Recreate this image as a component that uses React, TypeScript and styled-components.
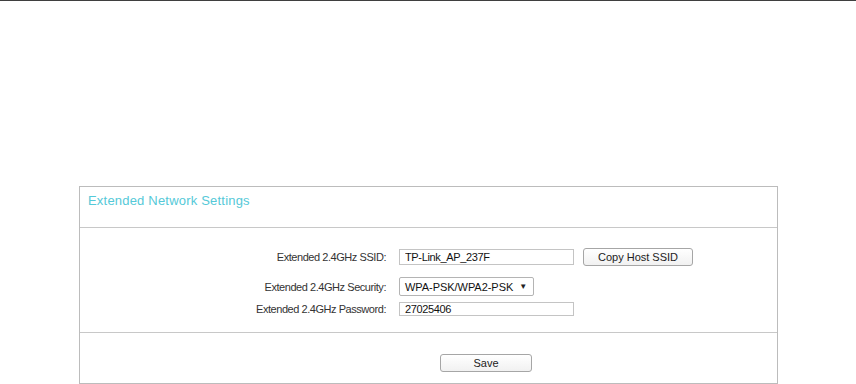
import styled, { createGlobalStyle } from 'styled-components';

const GlobalStyle = createGlobalStyle`
	html, body {
		margin: 0;
		padding: 0;
		background: #ffffff;
		font-family: "Liberation Sans", Arial, sans-serif;
	}
`;

const TopRule = styled.div`
	height: 1px;
	background: #3f3f3f;
`;

const Panel = styled.section`
	width: 697px;
	margin: 185px 0 0 79px;
	border: 1px solid #bcbcbc;
	border-bottom: none;
`;

const PanelHeader = styled.div`
	box-sizing: border-box;
	height: 41px;
	padding: 6px 0 0 8px;
	border-bottom: 1px solid #c8c8c8;
`;

const PanelTitle = styled.h2`
	margin: 0;
	font-size: 13px;
	line-height: 15px;
	font-weight: normal;
	letter-spacing: 0.2px;
	color: #55c9d8;
`;

const PanelBody = styled.div`
	padding: 20px 0 16px;
	border-bottom: 1px solid #c8c8c8;
`;

const FormRow = styled.div<{ $top?: number; $height: number }>`
	display: grid;
	grid-template-columns: 306px auto;
	column-gap: 13px;
	align-items: center;
	height: ${(p) => p.$height}px;
	margin-top: ${(p) => p.$top ?? 0}px;
`;

const Label = styled.label`
	text-align: right;
	font-size: 11px;
	letter-spacing: -0.45px;
	color: #333333;
`;

const Field = styled.div`
	display: flex;
	align-items: center;
	gap: 9px;
`;

const TextInput = styled.input<{ $height: number }>`
	box-sizing: border-box;
	width: 175px;
	height: ${(p) => p.$height}px;
	padding: 0 5px;
	border: 1px solid #c4c4c4;
	font-family: "Liberation Sans", Arial, sans-serif;
	font-size: 11px;
	letter-spacing: -0.35px;
	color: #111111;
	outline: none;
`;

const SelectBox = styled.div`
	box-sizing: border-box;
	width: 135px;
	height: 19px;
	padding: 0 6px 0 5px;
	display: flex;
	align-items: center;
	justify-content: space-between;
	border: 1px solid #b4b4b4;
	border-radius: 2px;
	font-size: 11px;
	letter-spacing: -0.05px;
	white-space: nowrap;
	color: #111111;
`;

const Caret = styled.span`
	font-size: 8px;
	color: #222222;
`;

const Button = styled.button<{ $width: number }>`
	box-sizing: border-box;
	width: ${(p) => p.$width}px;
	height: 18px;
	padding: 0;
	border: 1px solid #a6a6a6;
	border-radius: 3px;
	background: linear-gradient(#ffffff, #f1f1f1);
	font-family: "Liberation Sans", Arial, sans-serif;
	font-size: 11px;
	color: #222222;
`;

const PanelFooter = styled.div`
	box-sizing: border-box;
	height: 51px;
	padding: 20px 0 0 360px;
	border-bottom: 1px solid #bcbcbc;
`;

export default function App() {
	return (
		<>
			<GlobalStyle />
			<TopRule />
			<Panel>
				<PanelHeader>
					<PanelTitle>Extended Network Settings</PanelTitle>
				</PanelHeader>
				<PanelBody>
					<FormRow $height={18}>
						<Label>Extended 2.4GHz SSID:</Label>
						<Field>
							<TextInput $height={16} defaultValue="TP-Link_AP_237F" />
							<Button $width={110}>Copy Host SSID</Button>
						</Field>
					</FormRow>
					<FormRow $top={11} $height={19}>
						<Label>Extended 2.4GHz Security:</Label>
						<Field>
							<SelectBox>
								WPA-PSK/WPA2-PSK
								<Caret>▼</Caret>
							</SelectBox>
						</Field>
					</FormRow>
					<FormRow $top={6} $height={14}>
						<Label>Extended 2.4GHz Password:</Label>
						<Field>
							<TextInput $height={14} defaultValue="27025406" />
						</Field>
					</FormRow>
				</PanelBody>
				<PanelFooter>
					<Button $width={92}>Save</Button>
				</PanelFooter>
			</Panel>
		</>
	);
}
